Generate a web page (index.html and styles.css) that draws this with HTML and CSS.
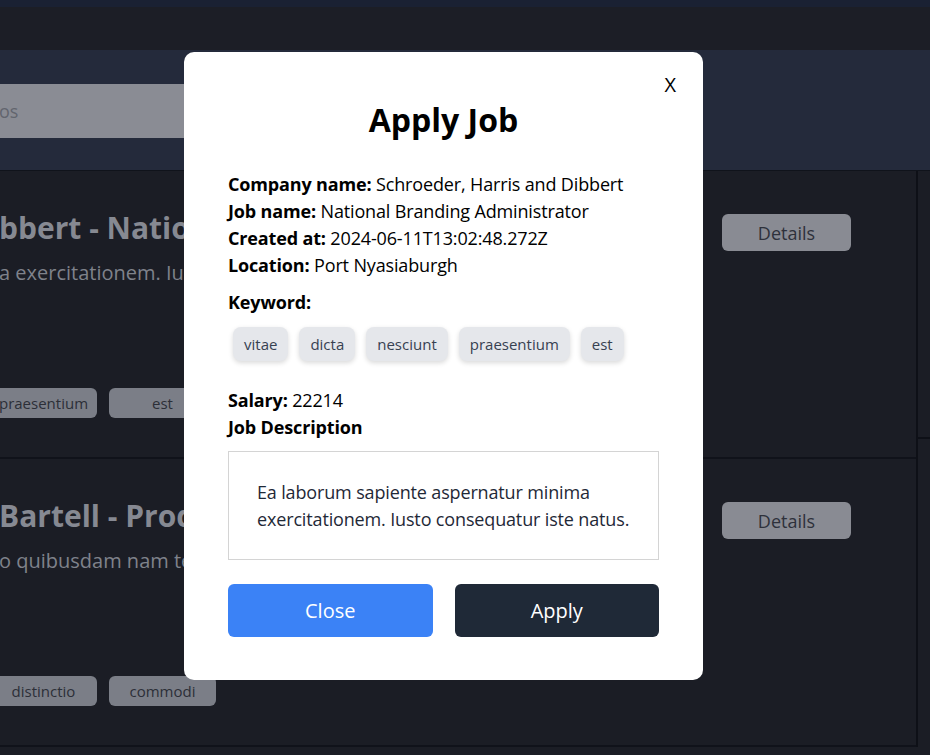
FILE: index.html
```html
<!DOCTYPE html>
<html lang="en">
<head>
<meta charset="utf-8">
<title>Apply Job</title>
<link rel="stylesheet" href="styles.css">
</head>
<body>
<div class="page">
  <div class="topstrip"></div>
  <nav class="nav"></nav>
  <header class="header">
    <div class="search"><span class="search-text">os</span></div>
  </header>
  <main class="main">
    <section class="list">
      <article class="card">
        <div class="card-body">
          <h2 class="card-title">bbert - National Branding Administrator</h2>
          <p class="card-desc">a exercitationem. Iusto consequatur iste natus.</p>
          <div class="card-tags">
            <span class="bg-tag">praesentium</span>
            <span class="bg-tag">est</span>
          </div>
        </div>
        <button class="details">Details</button>
      </article>
      <article class="card">
        <div class="card-body">
          <h2 class="card-title">Bartell - Product Markets Designer</h2>
          <p class="card-desc">o quibusdam nam tempore at voluptas.</p>
          <div class="card-tags">
            <span class="bg-tag">distinctio</span>
            <span class="bg-tag">commodi</span>
          </div>
        </div>
        <button class="details">Details</button>
      </article>
    </section>
    <aside class="side">
      <div class="side-card"></div>
    </aside>
  </main>
</div>

<div class="modal">
  <button class="modal-x">X</button>
  <h1 class="modal-title">Apply Job</h1>
  <div class="info">
    <div class="row"><b>Company name:</b> Schroeder, Harris and Dibbert</div>
    <div class="row"><b>Job name:</b> National Branding Administrator</div>
    <div class="row"><b>Created at:</b> 2024-06-11T13:02:48.272Z</div>
    <div class="row"><b>Location:</b> Port Nyasiaburgh</div>
  </div>
  <div class="row keyword"><b>Keyword:</b></div>
  <div class="tags">
    <span class="tag">vitae</span>
    <span class="tag">dicta</span>
    <span class="tag">nesciunt</span>
    <span class="tag">praesentium</span>
    <span class="tag">est</span>
  </div>
  <div class="row salary"><b>Salary:</b> 22214</div>
  <div class="row"><b>Job Description</b></div>
  <div class="desc">Ea laborum sapiente aspernatur minima exercitationem. Iusto consequatur iste natus.</div>
  <div class="actions">
    <button class="btn btn-close">Close</button>
    <button class="btn btn-apply">Apply</button>
  </div>
</div>
</body>
</html>
```
FILE: styles.css
```css
* { box-sizing: border-box; }
html, body { margin: 0; padding: 0; }
body {
  width: 930px;
  height: 755px;
  overflow: hidden;
  background: #1b1d25;
  font-family: "Open Sans", "Noto Sans", sans-serif;
  position: relative;
}
.page { width: 930px; }
.topstrip { height: 7px; background: #1a2133; }
.nav { height: 43px; background: #1c1e26; }
.header {
  height: 121px;
  background: #242a3b;
  border-bottom: 1px solid #10131b;
  padding-top: 34px;
}
.search {
  width: 420px;
  height: 54px;
  margin-left: -220px;
  background: #8a8c94;
  display: flex;
  align-items: center;
  padding-left: 219px;
}
.search-text { font-size: 18px; color: #62656e; }

.main { display: flex; }
.list { width: 916px; }
.card {
  height: 288px;
  border-bottom: 2px solid #10121a;
  display: flex;
  justify-content: space-between;
  padding: 37px 65px 0 0;
  overflow: hidden;
}
.card-body { min-width: 0; margin-left: -1px; }
.card-title {
  margin: 0;
  font-size: 30px;
  line-height: 40px;
  font-weight: 700;
  color: #868992;
  white-space: nowrap;
}
.card-desc {
  margin: 10px 0 0;
  font-size: 20px;
  line-height: 30px;
  color: #7f828b;
  white-space: nowrap;
}
.card-tags {
  margin-top: 100px;
  margin-left: -9px;
  display: flex;
  gap: 12px;
}
.bg-tag {
  width: 107px;
  height: 30px;
  line-height: 30px;
  text-align: center;
  border-radius: 6px;
  background: #7b7e87;
  color: #2c2f38;
  font-size: 15px;
}
.details {
  flex: none;
  margin-top: 6px;
  width: 129px;
  height: 37px;
  border: 0;
  border-radius: 6px;
  background: #898b93;
  color: #2e313b;
  font-family: inherit;
  font-size: 18px;
}
.side {
  flex: 1;
  border-left: 2px solid #0e1017;
}
.side-card {
  height: 268px;
  border-bottom: 2px solid #0e1017;
}

.modal {
  position: absolute;
  left: 184px;
  top: 52px;
  width: 519px;
  height: 628px;
  background: #fff;
  border-radius: 10px;
  padding: 48px 44px 44px;
  color: #000;
  letter-spacing: -0.15px;
}
.modal-x {
  position: absolute;
  top: 19px;
  right: 27px;
  border: 0;
  background: none;
  padding: 0;
  font-family: inherit;
  font-size: 20px;
  line-height: 28px;
  color: #000;
}
.modal-title {
  margin: 0;
  text-align: center;
  font-size: 32px;
  line-height: 40px;
  font-weight: 700;
  letter-spacing: 0;
}
.info { margin-top: 31px; }
.row { font-size: 18px; line-height: 27px; }
.row b { font-weight: 700; }
.keyword { margin-top: 10px; }
.tags {
  display: flex;
  flex-wrap: wrap;
  gap: 11px;
  padding: 5px;
  margin-top: 6px;
}
.tag {
  height: 34px;
  line-height: 34px;
  padding: 0 11px;
  border-radius: 8px;
  background: #e5e7eb;
  color: #374151;
  font-size: 15px;
  letter-spacing: 0;
  box-shadow: 0 2px 5px rgba(0,0,0,0.15);
}
.salary { margin-top: 21px; }
.desc {
  margin-top: 10px;
  border: 1px solid #d4d4d4;
  padding: 27px 26px 26px 28px;
  font-size: 18px;
  line-height: 27px;
  color: #1f2937;
}
.actions {
  margin-top: 24px;
  display: flex;
  gap: 22px;
}
.btn {
  flex: 1;
  height: 53px;
  border: 0;
  border-radius: 6px;
  font-family: inherit;
  font-size: 20px;
  letter-spacing: 0;
  color: #fff;
}
.btn-close { background: #3b82f6; }
.btn-apply { background: #1f2937; }
```
